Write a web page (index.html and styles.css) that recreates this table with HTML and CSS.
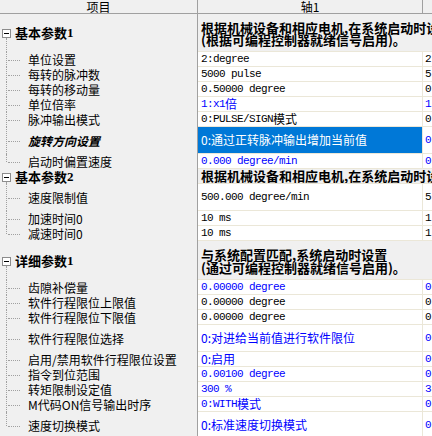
FILE: index.html
```html
<!DOCTYPE html>
<html lang="zh">
<head>
<meta charset="utf-8">
<title>参数设置</title>
<link rel="stylesheet" href="styles.css">
</head>
<body>
<div class="grid">
  <div class="row hdr">
    <div class="hname">项目</div>
    <div class="hax1">轴1</div>
    <div class="hax2"></div>
  </div>

  <div class="row h38">
    <div class="name grp">基本参数<span class="ser">1</span></div>
    <div class="d pt2"><div>根据机械设备和相应电机,在系统启动时设置</div><div>(根据可编程控制器就绪信号启用)。</div></div>
  </div>
  <div class="row h15">
    <div class="name ch">单位设置</div>
    <div class="v"><span class="m">2:degree</span></div>
    <div class="v2"><span class="m">2</span></div>
  </div>
  <div class="row h15">
    <div class="name ch">每转的脉冲数</div>
    <div class="v"><span class="m">5000 pulse</span></div>
    <div class="v2"><span class="m">5</span></div>
  </div>
  <div class="row h15">
    <div class="name ch">每转的移动量</div>
    <div class="v"><span class="m">0.50000 degree</span></div>
    <div class="v2"><span class="m">0</span></div>
  </div>
  <div class="row h15 blue">
    <div class="name ch">单位倍率</div>
    <div class="v"><span class="m">1:x1</span><span class="cj">倍</span></div>
    <div class="v2"><span class="m">1</span></div>
  </div>
  <div class="row h15">
    <div class="name ch">脉冲输出模式</div>
    <div class="v"><span class="m">0:PULSE/SIGN</span><span class="cj">模式</span></div>
    <div class="v2"><span class="m">0</span></div>
  </div>
  <div class="row h27 sel">
    <div class="name ch bi">旋转方向设置</div>
    <div class="v"><span class="cj">0:通过正转脉冲输出增加当前值</span></div>
    <div class="v2 bl"><span class="m">0</span></div>
  </div>
  <div class="row h15 blue">
    <div class="name ch last">启动时偏置速度</div>
    <div class="v"><span class="m">0.000 degree/min</span></div>
    <div class="v2"><span class="m">0</span></div>
  </div>

  <div class="row h15">
    <div class="name grp">基本参数<span class="ser">2</span></div>
    <div class="d"><div>根据机械设备和相应电机,在系统启动时设置</div></div>
  </div>
  <div class="row h27">
    <div class="name ch">速度限制值</div>
    <div class="v"><span class="m">500.000 degree/min</span></div>
    <div class="v2"><span class="m">5</span></div>
  </div>
  <div class="row h15">
    <div class="name ch">加速时间0</div>
    <div class="v"><span class="m">10 ms</span></div>
    <div class="v2"><span class="m">1</span></div>
  </div>
  <div class="row h15">
    <div class="name ch last">减速时间0</div>
    <div class="v"><span class="m">10 ms</span></div>
    <div class="v2"><span class="m">1</span></div>
  </div>

  <div class="row h39">
    <div class="name grp">详细参数<span class="ser">1</span></div>
    <div class="d pt2"><div>与系统配置匹配,系统启动时设置</div><div>(通过可编程控制器就绪信号启用)。</div></div>
  </div>
  <div class="row h15 blue">
    <div class="name ch">齿隙补偿量</div>
    <div class="v"><span class="m">0.00000 degree</span></div>
    <div class="v2"><span class="m">0</span></div>
  </div>
  <div class="row h15">
    <div class="name ch">软件行程限位上限值</div>
    <div class="v"><span class="m">0.00000 degree</span></div>
    <div class="v2"><span class="m">0</span></div>
  </div>
  <div class="row h15">
    <div class="name ch">软件行程限位下限值</div>
    <div class="v"><span class="m">0.00000 degree</span></div>
    <div class="v2"><span class="m">0</span></div>
  </div>
  <div class="row h27 blue">
    <div class="name ch">软件行程限位选择</div>
    <div class="v"><span class="cj">0:对进给当前值进行软件限位</span></div>
    <div class="v2"><span class="m">0</span></div>
  </div>
  <div class="row h15 blue">
    <div class="name ch">启用/禁用软件行程限位设置</div>
    <div class="v"><span class="cj">0:启用</span></div>
    <div class="v2"><span class="m">0</span></div>
  </div>
  <div class="row h15 blue">
    <div class="name ch">指令到位范围</div>
    <div class="v"><span class="m">0.00100 degree</span></div>
    <div class="v2"><span class="m">0</span></div>
  </div>
  <div class="row h15 blue">
    <div class="name ch">转矩限制设定值</div>
    <div class="v"><span class="m">300 %</span></div>
    <div class="v2"><span class="m">3</span></div>
  </div>
  <div class="row h15 blue">
    <div class="name ch">M代码ON信号输出时序</div>
    <div class="v"><span class="m">0:WITH</span><span class="cj">模式</span></div>
    <div class="v2"><span class="m">0</span></div>
  </div>
  <div class="row h27 blue">
    <div class="name ch last">速度切换模式</div>
    <div class="v"><span class="cj">0:标准速度切换模式</span></div>
    <div class="v2"><span class="m">0</span></div>
  </div>
</div>
</body>
</html>
```
FILE: styles.css
```css
html, body {
  margin: 0;
  padding: 0;
}
body {
  width: 432px;
  height: 436px;
  overflow: hidden;
  background: #ffffff;
  color: #000000;
  font-family: "Noto Sans CJK SC", "Noto Sans", sans-serif;
  font-size: 12px;
}
.grid {
  display: flex;
  flex-direction: column;
}
.row {
  display: flex;
  flex: none;
}
.h15 { height: 15px; }
.h27 { height: 27px; }
.h38 { height: 38px; }
.h39 { height: 39px; }

.hdr {
  height: 14px;
  background: #f0f0f0;
  border-bottom: 1px solid #a0a0a0;
  box-sizing: border-box;
  line-height: 13px;
}
.hname, .hax1 {
  flex: none;
  box-sizing: border-box;
  border-right: 1px solid #a0a0a0;
  text-align: center;
  font-size: 12px;
}
.hname { width: 198px; }
.hax1 { width: 225px; }
.hax2 { flex: 1; }

.name {
  width: 198px;
  flex: none;
  box-sizing: border-box;
  border-right: 1px solid #a0a0a0;
  background: #f0f0f0;
  position: relative;
  display: flex;
  align-items: center;
  padding-left: 28px;
  white-space: nowrap;
  line-height: 14px;
  color: #000;
}
.v {
  width: 225px;
  flex: none;
  box-sizing: border-box;
  border-right: 1px solid #ebe7d8;
  border-bottom: 1px solid #ebe7d8;
  display: flex;
  align-items: center;
  padding-left: 3px;
  background: #ffffff;
  white-space: nowrap;
  overflow: hidden;
  line-height: 14px;
}
.v2 {
  flex: 1;
  box-sizing: border-box;
  border-bottom: 1px solid #ebe7d8;
  display: flex;
  align-items: center;
  padding-left: 2px;
  overflow: hidden;
  white-space: nowrap;
  line-height: 14px;
}
.m {
  font-family: "Liberation Mono", monospace;
  font-size: 11px;
  letter-spacing: -0.6px;
}
.cj {
  font-family: "Noto Sans CJK SC", sans-serif;
  font-size: 12px;
}
.blue .v, .blue .v2 { color: #0000ff; }
.sel .v {
  background: #0078d7;
  color: #ffffff;
}
.sel .v2 { color: #0000ff; }

.bi {
  font-weight: bold;
  font-style: italic;
}

/* description rows */
.d {
  flex: 1;
  min-width: 0;
  box-sizing: border-box;
  background: #f0f0f0;
  border-bottom: 1px solid #ebe7d8;
  padding-left: 3px;
  font-weight: bold;
  font-size: 13px;
  white-space: nowrap;
  overflow: hidden;
  display: flex;
  flex-direction: column;
  justify-content: center;
  line-height: 12.5px;
}
.pt2 { padding-top: 3px; }

/* tree */
.grp {
  padding-left: 15px;
  font-weight: bold;
  font-size: 13px;
}
.ser {
  font-family: "Liberation Serif", serif;
  font-weight: bold;
}
.grp::before {
  content: "";
  position: absolute;
  left: 2px;
  top: calc(50% - 4px);
  width: 9px;
  height: 9px;
  box-sizing: border-box;
  border: 1px solid #8c8c8c;
  background: linear-gradient(#000, #000) center / 5px 1px no-repeat, #ffffff;
}
.grp::after {
  content: "";
  position: absolute;
  left: 6px;
  top: calc(50% + 5px);
  bottom: 0;
  border-left: 1px dotted #a0a0a0;
}
.ch::before {
  content: "";
  position: absolute;
  left: 6px;
  top: 0;
  bottom: 0;
  border-left: 1px dotted #a0a0a0;
}
.ch.last::before {
  bottom: 50%;
}
.ch::after {
  content: "";
  position: absolute;
  left: 8px;
  top: 50%;
  width: 12px;
  border-top: 1px dotted #a0a0a0;
}
```
